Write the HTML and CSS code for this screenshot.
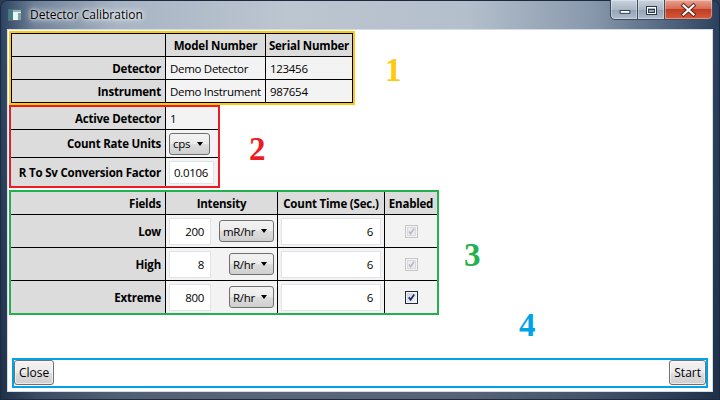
FILE: index.html
```html
<!DOCTYPE html>
<html>
<head>
<meta charset="utf-8">
<title>Detector Calibration</title>
<link rel="stylesheet" href="styles.css">
</head>
<body>
<div class="window">
  <div class="titlebar">
    <svg class="appicon" width="14" height="12" viewBox="0 0 14 12">
      <rect x="0.5" y="0.5" width="13" height="11" fill="#eef3f4" stroke="#5b6b73"/>
      <rect x="1" y="1" width="4" height="10" fill="#3f7f86"/>
      <rect x="5" y="1" width="8" height="2" fill="#8fb8bd"/>
      <rect x="10" y="4" width="3" height="7" fill="#7aa6ab"/>
    </svg>
    <span class="title">Detector Calibration</span>
    <div class="controls">
      <div class="ctl min">
        <svg width="27" height="19" viewBox="0 0 27 19"><rect x="9.5" y="10.5" width="10" height="3" fill="#fff" stroke="#2a3a50"/></svg>
      </div>
      <div class="ctl max">
        <svg width="26" height="19" viewBox="0 0 26 19"><rect x="8.5" y="6.5" width="10" height="8" fill="none" stroke="#2a3a50"/><rect x="9.5" y="7.5" width="8" height="6" fill="none" stroke="#fff"/><rect x="10.5" y="9.5" width="6" height="3" fill="none" stroke="#2a3a50"/></svg>
      </div>
      <div class="ctl close">
        <svg width="47" height="19" viewBox="0 0 47 19"><path d="M18.5 5.5 L28.5 14.5 M28.5 5.5 L18.5 14.5" stroke="#5a2018" stroke-width="4" stroke-linecap="square"/><path d="M18.5 5.5 L28.5 14.5 M28.5 5.5 L18.5 14.5" stroke="#fff" stroke-width="2.2" stroke-linecap="square"/></svg>
      </div>
    </div>
  </div>

  <div class="client">
    <div class="sec">
      <div class="box yellow">
        <div class="grid g1">
          <div class="c h"></div>
          <div class="c h ctr">Model Number</div>
          <div class="c h ctr">Serial Number</div>
          <div class="c h r">Detector</div>
          <div class="c">Demo Detector</div>
          <div class="c">123456</div>
          <div class="c h r">Instrument</div>
          <div class="c">Demo Instrument</div>
          <div class="c">987654</div>
        </div>
      </div>
      <div class="num n1">1</div>
    </div>

    <div class="sec">
      <div class="box red">
        <div class="grid g2">
          <div class="c h r">Active Detector</div>
          <div class="c">1</div>
          <div class="c h r">Count Rate Units</div>
          <div class="c ctl-cell">
            <div class="combo w-cps"><span>cps</span><i class="arrow"></i></div>
          </div>
          <div class="c h r">R To Sv Conversion Factor</div>
          <div class="c ctl-cell">
            <div class="tb tb-left">0.0106</div>
          </div>
        </div>
      </div>
      <div class="num n2">2</div>
    </div>

    <div class="sec sec3">
      <div class="box green">
        <div class="grid g3">
          <div class="c h r">Fields</div>
          <div class="c h ctr">Intensity</div>
          <div class="c h ctr">Count Time (Sec.)</div>
          <div class="c h ctr">Enabled</div>

          <div class="c h r">Low</div>
          <div class="c ctl-cell split">
            <div class="tb tb-num">200</div>
            <div class="combo w-mr"><span>mR/hr</span><i class="arrow"></i></div>
          </div>
          <div class="c ctl-cell"><div class="tb tb-wide">6</div></div>
          <div class="c ctr">
            <svg class="chk" width="13" height="13" viewBox="0 0 13 13"><rect x="0.5" y="0.5" width="12" height="12" fill="#f4f4f4" stroke="#c5c5c5"/><rect x="2.5" y="2.5" width="8" height="8" fill="#ececec" stroke="#dadada"/><path d="M4 6.5 L5.6 8.6 L9 3.8" fill="none" stroke="#b3b9c7" stroke-width="1.6"/></svg>
          </div>

          <div class="c h r">High</div>
          <div class="c ctl-cell split">
            <div class="tb tb-num">8</div>
            <div class="combo w-r"><span>R/hr</span><i class="arrow"></i></div>
          </div>
          <div class="c ctl-cell"><div class="tb tb-wide">6</div></div>
          <div class="c ctr">
            <svg class="chk" width="13" height="13" viewBox="0 0 13 13"><rect x="0.5" y="0.5" width="12" height="12" fill="#f4f4f4" stroke="#c5c5c5"/><rect x="2.5" y="2.5" width="8" height="8" fill="#ececec" stroke="#dadada"/><path d="M4 6.5 L5.6 8.6 L9 3.8" fill="none" stroke="#b3b9c7" stroke-width="1.6"/></svg>
          </div>

          <div class="c h r">Extreme</div>
          <div class="c ctl-cell split">
            <div class="tb tb-num">800</div>
            <div class="combo w-r"><span>R/hr</span><i class="arrow"></i></div>
          </div>
          <div class="c ctl-cell"><div class="tb tb-wide">6</div></div>
          <div class="c ctr">
            <svg class="chk" width="13" height="13" viewBox="0 0 13 13"><defs><linearGradient id="cg" x1="0" y1="0" x2="1" y2="1"><stop offset="0" stop-color="#cbcfd5"/><stop offset="1" stop-color="#f6f6f6"/></linearGradient></defs><rect x="0.5" y="0.5" width="12" height="12" fill="#f4f4f4" stroke="#1e2a3a"/><rect x="2" y="2" width="9" height="9" fill="url(#cg)"/><path d="M3.8 6.4 L5.6 8.8 L9.2 3.4" fill="none" stroke="#1f2d78" stroke-width="1.8"/></svg>
          </div>
        </div>
      </div>
      <div class="num n3">3</div>
    </div>

    <div class="row4"><span class="num n4">4</span></div>

    <div class="bar">
      <button class="btn">Close</button>
      <button class="btn">Start</button>
    </div>
  </div>
</div>
</body>
</html>
```

FILE: styles.css
```css
* { box-sizing: border-box; }
html, body { margin: 0; padding: 0; }
body {
  width: 720px;
  height: 400px;
  overflow: hidden;
  background: #2a3b52;
  font-family: "Open Sans", "Noto Sans", sans-serif;
  font-size: 11.5px;
  color: #000;
}
.window {
  width: 720px;
  height: 400px;
  display: flex;
  flex-direction: column;
  border-radius: 7px 7px 0 0;
  background:
    linear-gradient(to bottom, rgba(30, 45, 70, 0) 0px, rgba(30, 45, 70, 0) 28px, rgba(22, 36, 58, 0.6) 400px),
    linear-gradient(to right, #2c4160 0%, #6f8299 5%, #a7b4c3 16%, #bcc6d1 40%, #b3bfcb 65%, #8999ad 82%, #4c607b 94%, #2a3f5d 100%);
  box-shadow: inset 0 0 0 1px #1b2a3e;
}
.titlebar {
  height: 29px;
  display: flex;
  align-items: flex-start;
  flex: none;
}
.appicon { margin: 9px 0 0 8px; flex: none; }
.title {
  margin: 6px 0 0 8px;
  line-height: 17px;
  font-size: 12px;
  text-shadow: 0 0 6px #fff, 0 0 3px #fff, 0 0 10px rgba(255,255,255,0.8);
}
.controls {
  margin-left: auto;
  margin-right: 7px;
  display: flex;
  height: 20px;
}
.ctl {
  height: 20px;
  border: 1px solid #3b4b60;
  border-top: none;
  box-shadow: inset 0 0 0 1px rgba(255,255,255,0.35);
  display: flex;
}
.ctl.min {
  width: 28px;
  border-radius: 0 0 0 5px;
  background: linear-gradient(#c9d3de 0%, #aab6c4 50%, #94a2b4 51%, #aebbcb 100%);
}
.ctl.max {
  width: 27px;
  border-left: none;
  background: linear-gradient(#c9d3de 0%, #aab6c4 50%, #94a2b4 51%, #aebbcb 100%);
}
.ctl.close {
  width: 48px;
  border-left: none;
  border-radius: 0 0 5px 0;
  background: linear-gradient(#e9a292 0%, #d66d57 45%, #c23d22 50%, #d55a3c 100%);
}

.client {
  flex: 1;
  margin: 0 7px 8px 7px;
  background: #fff;
  border: 1px solid #d5dce4;
  display: flex;
  flex-direction: column;
  padding: 1px 0 0 1px;
}
.sec {
  display: flex;
  align-items: center;
}
.sec3 { margin-top: 2px; }
.box { border: 2px solid; }
.yellow { border-color: #ffc90e; }
.red { border-color: #ed1c24; }
.green { border-color: #22b14c; }

.grid {
  display: grid;
  gap: 1px;
  background: #000;
}
.g1 {
  grid-template-columns: 153px 99px 86px;
  grid-template-rows: 22px 22px 22px;
  border: 1px solid #000;
}
.g2 {
  grid-template-columns: 154px 52px;
  grid-template-rows: 22px 27px 28px;
}
.g3 {
  grid-template-columns: 154px 111px 106px 52px;
  grid-template-rows: 22px 32px 32px 32px;
}
.c {
  background: #f3f3f3;
  display: flex;
  align-items: center;
  padding: 0 4px;
  white-space: nowrap;
  letter-spacing: -0.3px;
}
.c.h { background: #dcdcdc; font-weight: bold; letter-spacing: -0.2px; }
.c.r { justify-content: flex-end; }
.c.ctr { justify-content: center; padding: 0; }
.c.ctl-cell { padding: 0 3px; }
.c.split { justify-content: space-between; }

.combo {
  height: 22px;
  display: flex;
  align-items: center;
  justify-content: space-between;
  border: 1px solid #707070;
  border-radius: 3px;
  background: linear-gradient(#f3f3f3 0%, #ebebeb 50%, #dddddd 51%, #cfcfcf 100%);
  padding: 0 6px 0 3px;
}
.w-cps { width: 41px; }
.w-mr { width: 55px; }
.w-r { width: 45px; }
.arrow {
  width: 0;
  height: 0;
  border-left: 3.5px solid transparent;
  border-right: 3.5px solid transparent;
  border-top: 4px solid #000;
}
.tb {
  background: #fff;
  border: 1px solid #e0e4e9;
  display: flex;
  align-items: center;
}
.tb-left { width: 45px; height: 23px; padding-left: 4px; }
.tb-num { width: 42px; height: 27px; justify-content: flex-end; padding-right: 6px; }
.tb-wide { width: 100px; height: 27px; justify-content: flex-end; padding-right: 7px; }
.chk { display: block; }

.num {
  font-family: "Liberation Serif", "Times New Roman", serif;
  font-weight: bold;
  font-size: 33px;
  line-height: 1;
}
.n1 { color: #ffc90e; margin-left: 30px; padding-top: 4px; }
.n2 { color: #ed1c24; margin-left: 29px; padding-top: 6px; }
.n3 { color: #22b14c; margin-left: 25px; padding-top: 6px; }
.row4 { margin-top: -6px; padding-left: 510px; }
.n4 { color: #00a2e8; display: block; }

.bar {
  margin: auto 4px 3px 3px;
  height: 30px;
  border: 2px solid #00a2e8;
  display: flex;
  justify-content: space-between;
  align-items: flex-start;
}
.btn {
  height: 25px;
  margin: 0;
  padding: 0 4px;
  font-family: "Open Sans", "Noto Sans", sans-serif;
  font-size: 12px;
  color: #000;
  border: 1px solid #707070;
  border-radius: 3px;
  background: linear-gradient(#f3f3f3 0%, #ebebeb 50%, #dddddd 51%, #cfcfcf 100%);
  box-shadow: inset 0 0 0 1px rgba(255,255,255,0.6);
}
```
